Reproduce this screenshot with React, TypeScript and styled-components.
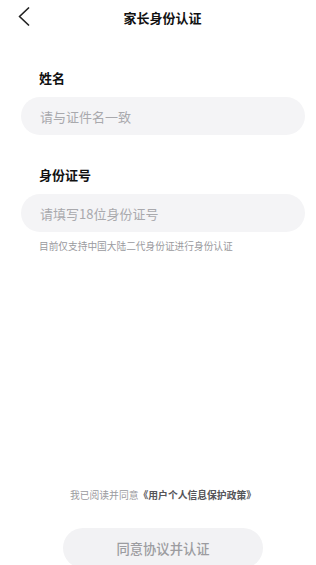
import React from 'react';
import styled, { createGlobalStyle } from 'styled-components';

const GlobalStyle = createGlobalStyle`
    html, body {
        margin: 0;
        padding: 0;
        background: #ffffff;
    }
    body {
        font-family: "Noto Sans CJK SC", "Noto Sans", sans-serif;
        -webkit-font-smoothing: antialiased;
    }
    * {
        box-sizing: border-box;
    }
`;

const Page = styled.div`
    width: 316px;
    height: 565px;
    overflow: hidden;
    display: flex;
    flex-direction: column;
    background: #ffffff;
`;

const Header = styled.div`
    position: relative;
    height: 34px;
    padding-left: 9px;
    display: flex;
    align-items: center;
    justify-content: center;
`;

const BackButton = styled.button`
    position: absolute;
    left: 14px;
    top: 4px;
    width: 20px;
    height: 26px;
    padding: 0;
    border: none;
    background: none;
    display: flex;
    align-items: center;
    justify-content: center;
`;

const Title = styled.h1`
    margin: 0;
    font-size: 13px;
    font-weight: 700;
    color: #111111;
    line-height: 1;
`;

const Form = styled.div`
    display: flex;
    flex-direction: column;
    padding: 37px 11px 0 21px;
`;

const Field = styled.div<{ $gap?: number }>`
    display: flex;
    flex-direction: column;
    margin-bottom: ${(p) => p.$gap ?? 0}px;
`;

const Label = styled.label`
    font-size: 13px;
    font-weight: 700;
    color: #111111;
    line-height: 13px;
    padding-left: 18px;
    margin-bottom: 13px;
`;

const Input = styled.input`
    width: 284px;
    height: 38px;
    border: none;
    outline: none;
    border-radius: 19px;
    background: #f4f4f6;
    padding: 0 19px;
    font-family: inherit;
    font-size: 13px;
    color: #333333;
    &::placeholder {
        color: #a9a9ad;
    }
`;

const Hint = styled.p`
    margin: 8px 0 0 18px;
    font-size: 9.7px;
    line-height: 12px;
    color: #9a9a9e;
`;

const Footer = styled.div`
    margin-top: auto;
    padding-left: 10px;
    display: flex;
    flex-direction: column;
    align-items: center;
`;

const Agreement = styled.p`
    margin: 0 0 27px;
    font-size: 9.8px;
    line-height: 12px;
    color: #9a9a9e;
    text-align: center;
`;

const PolicyLink = styled.span`
    color: #555559;
    font-weight: 700;
`;

const SubmitButton = styled.button`
    width: 200px;
    height: 40px;
    margin-bottom: -3px;
    border: none;
    border-radius: 20px;
    background: #f2f2f4;
    color: #9c9ca0;
    font-family: inherit;
    font-size: 13.3px;
    font-weight: 500;
`;

export default function App() {
    return (
        <>
            <GlobalStyle />
            <Page>
                <Header>
                    <BackButton aria-label="返回">
                        <svg width="14" height="20" viewBox="0 0 14 20" fill="none">
                            <polyline
                                points="11.5,1 2.5,9.5 11.5,18"
                                stroke="#222222"
                                strokeWidth="1.7"
                                strokeLinecap="round"
                                strokeLinejoin="round"
                            />
                        </svg>
                    </BackButton>
                    <Title>家长身份认证</Title>
                </Header>
                <Form>
                    <Field $gap={33}>
                        <Label>姓名</Label>
                        <Input placeholder="请与证件名一致" />
                    </Field>
                    <Field>
                        <Label>身份证号</Label>
                        <Input placeholder="请填写18位身份证号" />
                        <Hint>目前仅支持中国大陆二代身份证进行身份认证</Hint>
                    </Field>
                </Form>
                <Footer>
                    <Agreement>
                        我已阅读并同意<PolicyLink>《用户个人信息保护政策》</PolicyLink>
                    </Agreement>
                    <SubmitButton>同意协议并认证</SubmitButton>
                </Footer>
            </Page>
        </>
    );
}
